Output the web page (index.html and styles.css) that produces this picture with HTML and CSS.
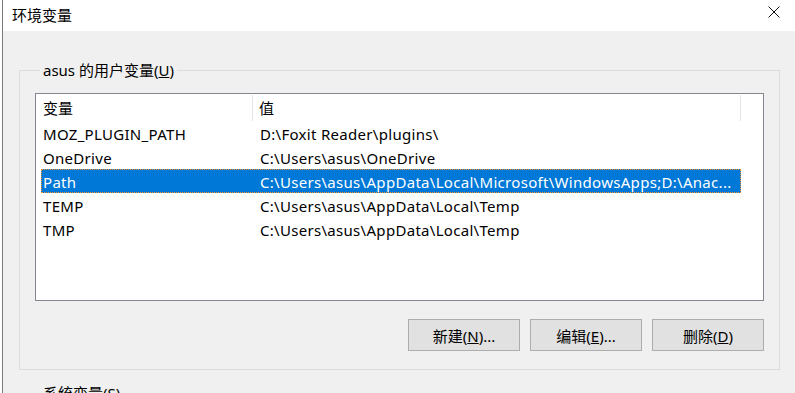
FILE: index.html
```html
<!DOCTYPE html>
<html lang="zh-CN">
<head>
    <meta charset="UTF-8">
    <meta name="viewport" content="width=device-width, initial-scale=1.0">
    <link rel="stylesheet" href="styles.css">
    <title>环境变量</title>
</head>
<body>
    <div class="window">
        <div class="titlebar">
            <span class="title">环境变量</span>
            <svg class="close" width="12" height="12" viewBox="0 0 12 12">
                <path d="M0.5 0.5 L11.5 11.5 M11.5 0.5 L0.5 11.5" stroke="#111" stroke-width="1" fill="none"/>
            </svg>
        </div>

        <div class="content">
            <!-- user variables -->
            <fieldset class="group">
                <legend>asus 的用户变量(<u>U</u>)</legend>
                <div class="list">
                    <div class="list-head">
                        <div class="cell name">变量</div>
                        <div class="cell value">值</div>
                    </div>
                    <div class="row"><div class="cell name">MOZ_PLUGIN_PATH</div><div class="cell value">D:\Foxit Reader\plugins\</div></div>
                    <div class="row"><div class="cell name">OneDrive</div><div class="cell value">C:\Users\asus\OneDrive</div></div>
                    <div class="row selected"><div class="cell name">Path</div><div class="cell value">C:\Users\asus\AppData\Local\Microsoft\WindowsApps;D:\Anac...</div></div>
                    <div class="row"><div class="cell name">TEMP</div><div class="cell value">C:\Users\asus\AppData\Local\Temp</div></div>
                    <div class="row"><div class="cell name">TMP</div><div class="cell value">C:\Users\asus\AppData\Local\Temp</div></div>
                </div>
                <div class="buttons">
                    <button class="btn">新建(<u>N</u>)...</button>
                    <button class="btn">编辑(<u>E</u>)...</button>
                    <button class="btn">删除(<u>D</u>)</button>
                </div>
            </fieldset>

            <!-- system variables -->
            <fieldset class="group system">
                <legend>系统变量(<u>S</u>)</legend>
            </fieldset>
        </div>
    </div>
</body>
</html>
```

FILE: styles.css
```css
html, body {
    margin: 0;
    height: 100%;
    overflow: hidden;
  }

  body {
    background-color: #fff;
    font-family: "Noto Sans", "Noto Sans CJK SC", sans-serif;
    font-size: 15px;
    color: #000;
  }

  .window {
    margin-left: 2px;
    height: 100%;
    border-left: 1px solid #7a7a7a;
    background-color: #f0f0f0;
  }

  .titlebar {
    height: 31px;
    display: flex;
    align-items: center;
    justify-content: space-between;
    padding: 0 15px 0 9px;
    background-color: #fff;
  }

  .title {
    font-size: 15px;
    margin-top: -3px;
  }

  .close {
    display: block;
    margin-top: -7px;
  }

  .content {
    padding: 29px 15px 0 16px;
  }

  .group {
    margin: 0;
    padding: 13px 15px 19px 15px;
    border: 1px solid #dcdcdc;
    height: 310px;
    box-sizing: border-box;
  }

  .group legend {
    padding: 0 3px;
    margin-left: 5px;
    line-height: 20px;
  }

  .group.system {
    margin-top: 13px;
  }

  .list {
    height: 208px;
    box-sizing: border-box;
    border: 1px solid #828790;
    background-color: #fff;
    padding-left: 5px;
  }

  .list-head, .row {
    display: grid;
    grid-template-columns: 212px 488px;
    width: 700px;
  }

  .list-head {
    height: 27px;
  }

  .list-head .cell {
    border-right: 1px solid #e5e5e5;
    margin-top: 1px;
    line-height: 27px;
  }

  .list-head .name {
    padding-left: 2px;
  }

  .list-head .value {
    padding-left: 6px;
  }

  .row {
    height: 24px;
    line-height: 26px;
    letter-spacing: 0.3px;
  }

  .cell {
    white-space: nowrap;
    overflow: hidden;
  }

  .row .name {
    padding-left: 2px;
  }

  .row .value {
    padding-left: 7px;
  }

  .row.selected {
    background-color: #0078d7;
    color: #fff;
    outline: 1px dotted #f2922c;
    outline-offset: -1px;
  }

  .buttons {
    display: flex;
    justify-content: flex-end;
    gap: 10px;
    margin-top: 18px;
  }

  .btn {
    width: 112px;
    height: 32px;
    border: 1px solid #adadad;
    background-color: #e1e1e1;
    font-family: inherit;
    font-size: 15px;
    color: #000;
    padding: 0;
  }
```
